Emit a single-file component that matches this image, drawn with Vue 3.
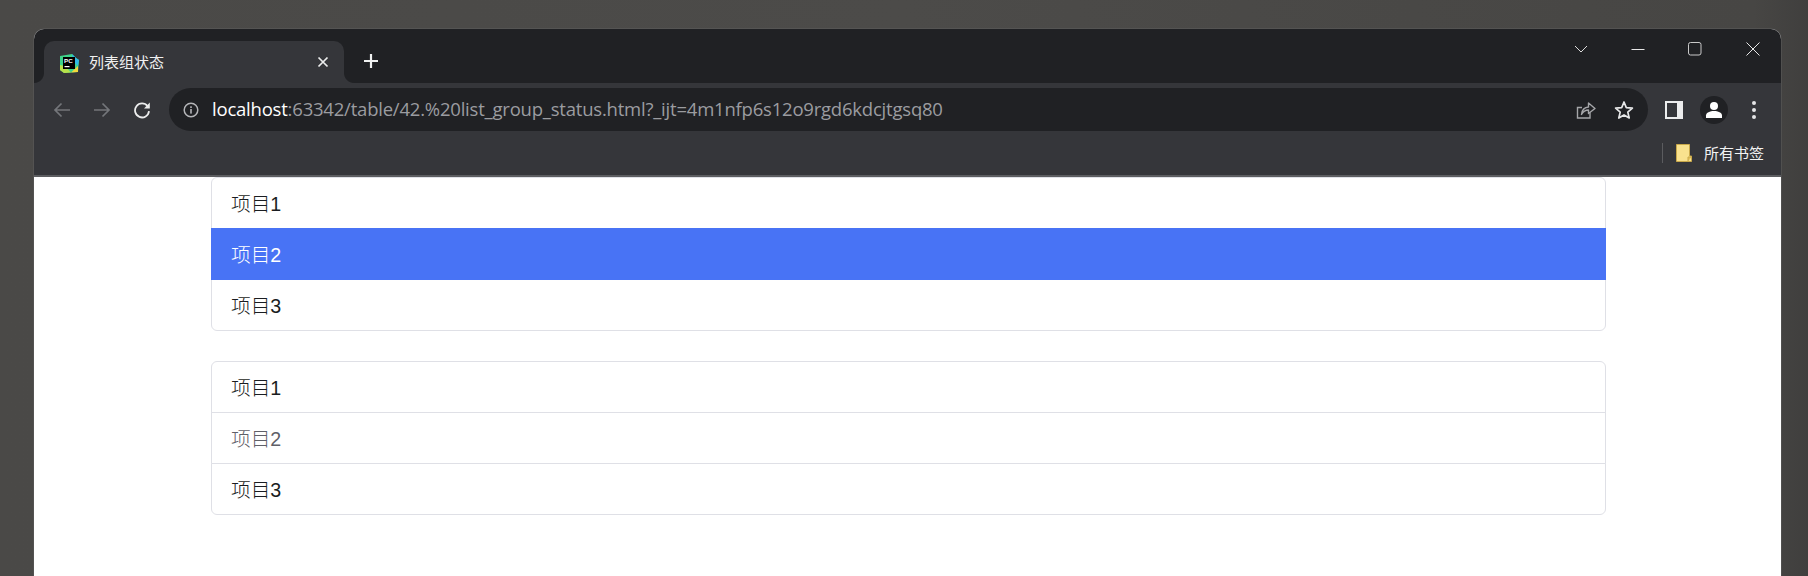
<script setup>
const groups = [
  [{ t: '项目1' }, { t: '项目2', c: 'active' }, { t: '项目3' }],
  [{ t: '项目1' }, { t: '项目2', c: 'muted' }, { t: '项目3' }],
]
</script>

<template>
  <div class="page">
    <div class="window">
      <div class="titlebar">
        <div class="tab">
          <svg class="fav" viewBox="0 0 20 20" width="20" height="20">
            <path d="M1 3 L13 1 L17 5 L20 7 L19 19 L5 20 L1 17 Z" fill="#3fd48a"/>
            <path d="M13 1 L17 5 L20 7 L19 13 L14 8 Z" fill="#2fb8e8"/>
            <path d="M1 12 L1 17 L5 20 L12 19.5 L6 13 Z" fill="#b8e04a"/>
            <path d="M19 13 L19 19 L12 19.5 Z" fill="#f2d93c"/>
            <rect x="4" y="4" width="12" height="12" fill="#000"/>
            <rect x="5.5" y="13" width="5" height="1.2" fill="#fff"/>
            <text x="5" y="10.2" class="fav-text">PC</text>
          </svg>
          <span class="tab-title">列表组状态</span>
          <svg class="tab-close" viewBox="0 0 12 12" width="12" height="12">
            <path d="M1.5 1.5 L10.5 10.5 M10.5 1.5 L1.5 10.5" stroke="#eceded" stroke-width="1.7" fill="none"/>
          </svg>
        </div>
        <svg class="plus" viewBox="0 0 16 16" width="16" height="16">
          <path d="M8 1 V15 M1 8 H15" stroke="#f1f2f2" stroke-width="2.2" fill="none"/>
        </svg>
        <div class="controls">
          <svg viewBox="0 0 14 14" width="14" height="14" class="c-chev">
            <path d="M1 4 L7 10 L13 4" stroke="#dcdcdc" fill="none"/>
          </svg>
          <svg viewBox="0 0 14 14" width="14" height="14" class="c-min">
            <path d="M0.5 7.5 H13.5" stroke="#e8e8e8" fill="none"/>
          </svg>
          <svg viewBox="0 0 14 14" width="14" height="14" class="c-max">
            <rect x="0.5" y="0.5" width="12.5" height="12.5" rx="2" stroke="#c9c9c9" fill="none"/>
          </svg>
          <svg viewBox="0 0 14 14" width="14" height="14" class="c-close">
            <path d="M0.5 0.5 L13.5 13.5 M13.5 0.5 L0.5 13.5" stroke="#e8e8e8" fill="none"/>
          </svg>
        </div>
      </div>

      <div class="toolbar">
        <svg class="nav nav-back" viewBox="0 0 18 18" width="18" height="18">
          <path d="M17 9 H2 M8.5 2.5 L2 9 L8.5 15.5" stroke="#74767a" stroke-width="1.7" fill="none"/>
        </svg>
        <svg class="nav nav-fwd" viewBox="0 0 18 18" width="18" height="18">
          <path d="M1 9 H16 M9.5 2.5 L16 9 L9.5 15.5" stroke="#74767a" stroke-width="1.7" fill="none"/>
        </svg>
        <svg class="nav nav-reload" viewBox="0 0 18 18" width="18" height="18">
          <path d="M14.6 5.2 A7 7 0 1 0 16 10.2" stroke="#eceded" stroke-width="1.8" fill="none"/>
          <path d="M16.8 1.6 V7.4 H11 Z" fill="#eceded"/>
        </svg>
        <div class="omnibox">
          <svg class="info" viewBox="0 0 16 16" width="16" height="16">
            <circle cx="8" cy="8" r="6.8" stroke="#b4b5b8" stroke-width="1.5" fill="none"/>
            <rect x="7.2" y="7" width="1.6" height="4.6" fill="#b4b5b8"/>
            <rect x="7.2" y="4.3" width="1.6" height="1.7" fill="#b4b5b8"/>
          </svg>
          <span class="url"><span class="host">localhost</span>:63342/table/42.%20list_group_status.html?_ijt=4m1nfp6s12o9rgd6kdcjtgsq80</span>
          <svg class="share" viewBox="0 0 20 20" width="20" height="20">
            <path d="M14 12.5 V18 H1.5 V7.5 H6" stroke="#a5a6a9" stroke-width="1.4" fill="none"/>
            <path d="M5.5 14.5 C6 9.5 9 7.2 12.5 7 V3 L19 8.5 L12.5 13.5 V10 C9.5 10 7.2 11.5 5.5 14.5 Z" stroke="#a5a6a9" stroke-width="1.4" fill="none" stroke-linejoin="round"/>
          </svg>
          <svg class="star" viewBox="0 0 20 20" width="20" height="20">
            <path d="M10 2 L12.3 7.6 L18.4 8.1 L13.8 12.1 L15.2 18 L10 14.9 L4.8 18 L6.2 12.1 L1.6 8.1 L7.7 7.6 Z" stroke="#e6e7e8" stroke-width="1.7" fill="none" stroke-linejoin="round"/>
          </svg>
        </div>
        <svg class="panel" viewBox="0 0 18 18" width="18" height="18">
          <path fill-rule="evenodd" d="M0 0 H18 V18 H0 Z M2 2 V16 H12 V2 Z" fill="#eceded"/>
        </svg>
        <div class="avatar">
          <svg viewBox="0 0 18 18" width="18" height="18">
            <circle cx="9" cy="5" r="4" fill="#fff"/>
            <path d="M1 17 V14.5 C1 11.5 5 10 9 10 C13 10 17 11.5 17 14.5 V17 Z" fill="#fff"/>
          </svg>
        </div>
        <div class="dots"><i></i><i></i><i></i></div>
      </div>

      <div class="bookmarks">
        <div class="sep"></div>
        <svg class="folder" viewBox="0 0 16 18" width="16" height="18">
          <path d="M0.5 0.5 H13.5 V12 H15.5 V17.5 H0.5 Z" fill="#f9e28e" stroke="#c9a94a"/>
          <path d="M12 17.5 V13 H15.5" fill="#e3c25c" stroke="#c9a94a"/>
        </svg>
        <span class="bm-text">所有书签</span>
      </div>

      <div class="content">
        <ul v-for="(g, i) in groups" :key="i" class="list">
          <li v-for="item in g" :key="item.t" class="item" :class="item.c"><span class="label">{{ item.t }}</span></li>
        </ul>
      </div>
    </div>
  </div>
</template>

<style>
html, body { margin: 0; background: #4a4947; }
</style>

<style scoped>
.page {
  width: 1808px;
  height: 576px;
  overflow: hidden;
  box-sizing: border-box;
  padding: 29px 27px 0 34px;
  background: linear-gradient(90deg, #4a4947 0%, #4c4b49 50%, #474644 97%, #403f3e 100%);
}
.window {
  height: 560px;
  background: #fff;
  border-radius: 10px 10px 0 0;
  overflow: hidden;
  box-shadow: 0 0 0 0.5px #5f5f5f;
}
.titlebar {
  height: 54px;
  box-sizing: border-box;
  padding: 12px 0 0 10px;
  background: #202124;
  display: flex;
  align-items: flex-start;
}
.tab {
  position: relative;
  width: 300px;
  height: 42px;
  box-sizing: border-box;
  padding: 0 14px 0 15px;
  background: #35363a;
  border-radius: 10px 10px 0 0;
  display: flex;
  align-items: center;
}
.tab::before,
.tab::after {
  content: "";
  position: absolute;
  bottom: 0;
  width: 10px;
  height: 10px;
}
.tab::before {
  left: -10px;
  background: radial-gradient(circle at 0 0, #202124 9.5px, #35363a 10.5px);
}
.tab::after {
  right: -10px;
  background: radial-gradient(circle at 100% 0, #202124 9.5px, #35363a 10.5px);
}
.fav { flex: none; margin-top: 1px; }
.fav-text {
  font: 700 6.2px "Liberation Sans", sans-serif;
  fill: #fff;
}
.tab-title {
  margin-left: 10px;
  margin-top: -2px;
  flex: 1;
  font: 15px "Noto Sans CJK SC", sans-serif;
  color: #f0f0f0;
}
.tab-close { flex: none; margin-top: -1px; margin-right: 1px; }
.plus { margin: 12px 0 0 19px; flex: none; }
.controls {
  margin-left: auto;
  display: flex;
  padding: 0 21px 0 0;
  margin-top: 1px;
}
.c-chev { margin-right: 43px; }
.c-min { margin-right: 43px; }
.c-max { margin-right: 44px; }
.toolbar {
  height: 48px;
  box-sizing: border-box;
  padding: 5px 0 0 19px;
  background: #35363a;
  display: flex;
  align-items: center;
}
.nav { flex: none; }
.nav-fwd { margin-left: 22px; }
.nav-reload { margin-left: 22px; }
.omnibox {
  margin-left: 18px;
  width: 1479px;
  height: 43px;
  box-sizing: border-box;
  padding: 0 18px 0 14px;
  background: #202124;
  border-radius: 22px;
  display: flex;
  align-items: center;
  flex: none;
}
.info { flex: none; }
.url {
  margin-left: 13px;
  margin-top: -2px;
  flex: 1;
  white-space: nowrap;
  font: 18.5px "Open Sans", sans-serif;
  color: #9b9ca0;
  letter-spacing: -0.21px;
}
.host { color: #fff; }
.share { margin-right: 18px; margin-left: 4px; flex: none; }
.star { flex: none; margin-right: -4px; }
.panel { margin-left: 17px; flex: none; }
.avatar {
  margin-left: 17px;
  width: 28px;
  height: 28px;
  border-radius: 50%;
  background: #202124;
  display: flex;
  align-items: center;
  justify-content: center;
  flex: none;
}
.dots {
  margin-left: 24px;
  display: flex;
  flex-direction: column;
  gap: 3px;
}
.dots i {
  width: 4px;
  height: 4px;
  border-radius: 50%;
  background: #e4e5e6;
}
.bookmarks {
  height: 46px;
  box-sizing: border-box;
  padding: 0 0 0 1628px;
  background: #35363a;
  display: flex;
  align-items: center;
  border-bottom: 2px solid #5c5d60;
}
.sep { width: 1px; height: 20px; background: #5b5c5f; flex: none; }
.folder { margin-left: 13px; flex: none; }
.bm-text {
  margin-left: 12px;
  margin-top: -2px;
  font: 15px "Noto Sans CJK SC", sans-serif;
  color: #f2f3f3;
  white-space: nowrap;
}
.content {
  padding: 0 175px 0 177px;
}
.list {
  list-style: none;
  margin: 0 0 30px;
  padding: 0;
}
.item {
  position: relative;
  height: 52px;
  box-sizing: border-box;
  margin-top: -1px;
  padding: 0 19px;
  display: flex;
  align-items: center;
  border: 1px solid #dfe0e6;
  font: 300 19.7px "Liberation Sans", "Noto Sans CJK SC", sans-serif;
  color: #1a1d21;
  background: #fff;
}
.label { margin-top: -2px; }
.list .item:first-child {
  margin-top: 0;
  border-radius: 6px 6px 0 0;
}
.list .item:last-child {
  border-radius: 0 0 6px 6px;
}
.item.active {
  z-index: 1;
  background: #4873f5;
  border-color: #4873f5;
  color: #fff;
}
.item.muted { color: #5f6068; }
</style>
